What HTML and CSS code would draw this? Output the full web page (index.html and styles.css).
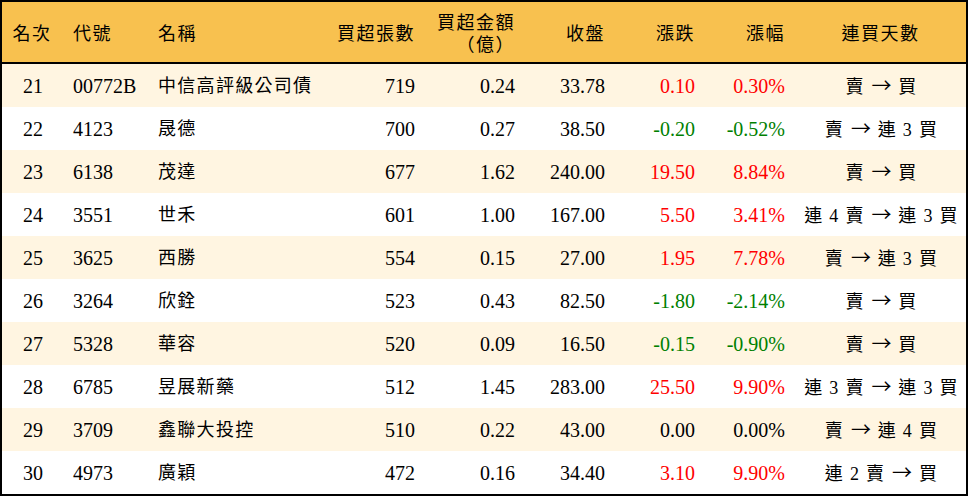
FILE: index.html
```html
<!DOCTYPE html>
<html lang="zh-Hant">
<head>
<meta charset="utf-8">
<link rel="stylesheet" href="styles.css">
</head>
<body>
<div class="frame">
<table class="grid">
<colgroup>
<col class="c1"><col class="c2"><col class="c3"><col class="c4"><col class="c5"><col class="c6"><col class="c7"><col class="c8"><col class="c9">
</colgroup>
<thead>
<tr>
<th class="ctr">名次</th>
<th class="lft code">代號</th>
<th class="lft name">名稱</th>
<th class="rgt">買超張數</th>
<th class="rgt two"><span class="l1">買超金額</span><span class="l2">（億）</span></th>
<th class="rgt">收盤</th>
<th class="rgt">漲跌</th>
<th class="rgt">漲幅</th>
<th class="ctr">連買天數</th>
</tr>
</thead>
<tbody>
<tr class="odd"><td class="ctr">21</td><td class="code">00772B</td><td class="name zh">中信高評級公司債</td><td class="rgt">719</td><td class="rgt">0.24</td><td class="rgt">33.78</td><td class="rgt up">0.10</td><td class="rgt up">0.30%</td><td class="ctr zh">賣 <span class="arr">→</span> 買</td></tr>
<tr><td class="ctr">22</td><td class="code">4123</td><td class="name zh">晟德</td><td class="rgt">700</td><td class="rgt">0.27</td><td class="rgt">38.50</td><td class="rgt dn">-0.20</td><td class="rgt dn">-0.52%</td><td class="ctr zh">賣 <span class="arr">→</span> 連 3 買</td></tr>
<tr class="odd"><td class="ctr">23</td><td class="code">6138</td><td class="name zh">茂達</td><td class="rgt">677</td><td class="rgt">1.62</td><td class="rgt">240.00</td><td class="rgt up">19.50</td><td class="rgt up">8.84%</td><td class="ctr zh">賣 <span class="arr">→</span> 買</td></tr>
<tr><td class="ctr">24</td><td class="code">3551</td><td class="name zh">世禾</td><td class="rgt">601</td><td class="rgt">1.00</td><td class="rgt">167.00</td><td class="rgt up">5.50</td><td class="rgt up">3.41%</td><td class="ctr zh">連 4 賣 <span class="arr">→</span> 連 3 買</td></tr>
<tr class="odd"><td class="ctr">25</td><td class="code">3625</td><td class="name zh">西勝</td><td class="rgt">554</td><td class="rgt">0.15</td><td class="rgt">27.00</td><td class="rgt up">1.95</td><td class="rgt up">7.78%</td><td class="ctr zh">賣 <span class="arr">→</span> 連 3 買</td></tr>
<tr><td class="ctr">26</td><td class="code">3264</td><td class="name zh">欣銓</td><td class="rgt">523</td><td class="rgt">0.43</td><td class="rgt">82.50</td><td class="rgt dn">-1.80</td><td class="rgt dn">-2.14%</td><td class="ctr zh">賣 <span class="arr">→</span> 買</td></tr>
<tr class="odd"><td class="ctr">27</td><td class="code">5328</td><td class="name zh">華容</td><td class="rgt">520</td><td class="rgt">0.09</td><td class="rgt">16.50</td><td class="rgt dn">-0.15</td><td class="rgt dn">-0.90%</td><td class="ctr zh">賣 <span class="arr">→</span> 買</td></tr>
<tr><td class="ctr">28</td><td class="code">6785</td><td class="name zh">昱展新藥</td><td class="rgt">512</td><td class="rgt">1.45</td><td class="rgt">283.00</td><td class="rgt up">25.50</td><td class="rgt up">9.90%</td><td class="ctr zh">連 3 賣 <span class="arr">→</span> 連 3 買</td></tr>
<tr class="odd"><td class="ctr">29</td><td class="code">3709</td><td class="name zh">鑫聯大投控</td><td class="rgt">510</td><td class="rgt">0.22</td><td class="rgt">43.00</td><td class="rgt">0.00</td><td class="rgt">0.00%</td><td class="ctr zh">賣 <span class="arr">→</span> 連 4 買</td></tr>
<tr><td class="ctr">30</td><td class="code">4973</td><td class="name zh">廣穎</td><td class="rgt">472</td><td class="rgt">0.16</td><td class="rgt">34.40</td><td class="rgt up">3.10</td><td class="rgt up">9.90%</td><td class="ctr zh">連 2 賣 <span class="arr">→</span> 買</td></tr>
</tbody>
</table>
</div>
</body>
</html>
```
FILE: styles.css
```css
html, body {
  margin: 0;
  padding: 0;
  background: #ffffff;
}
.frame {
  width: 964px;
  border: 2px solid #000;
}
.grid {
  width: 964px;
  table-layout: fixed;
  border-collapse: separate;
  border-spacing: 0;
  font-family: "Liberation Serif", "Noto Sans CJK TC", serif;
  font-size: 20px;
  color: #000;
}
.c1 { width: 60px; }
.c2 { width: 86px; }
.c3 { width: 182px; }
.c4 { width: 95px; }
.c5 { width: 100px; }
.c6 { width: 90px; }
.c7 { width: 90px; }
.c8 { width: 90px; }
.c9 { width: 171px; }
.grid th {
  background: #f8c14f;
  height: 59px;
  padding: 0 10px 0 0;
  border-bottom: 2px solid #000;
  font-family: "Noto Sans CJK TC", sans-serif;
  font-size: 18px;
  font-weight: normal;
  letter-spacing: 1.5px;
  line-height: 20px;
  white-space: nowrap;
}
.grid th.two { padding-top: 0; padding-bottom: 1px; }
.two .l1, .two .l2 { display: block; line-height: 20px; }
.two .l1 { margin-bottom: 2px; }
.grid td {
  height: 43px;
  padding: 0 10px 0 0;
  white-space: nowrap;
  line-height: 22px;
}
.grid tr.odd td { background: #fff5e1; }
.grid .ctr { text-align: center; padding: 0; }
.grid .lft { text-align: left; }
.grid .rgt { text-align: right; }
.grid .code { text-align: left; padding-left: 11px; }
.grid .name { text-align: left; padding-left: 10px; }
.grid td.zh {
  font-size: 18px;
  letter-spacing: 1.3px;
}
.grid td.ctr { padding-left: 2px; }
.arr {
  font-family: "Noto Sans CJK TC", sans-serif;
  font-size: 20px;
  display: inline-block;
  letter-spacing: 0;
  margin: 0 1px;
}
.up { color: #ff0000; }
.dn { color: #008000; }
```
